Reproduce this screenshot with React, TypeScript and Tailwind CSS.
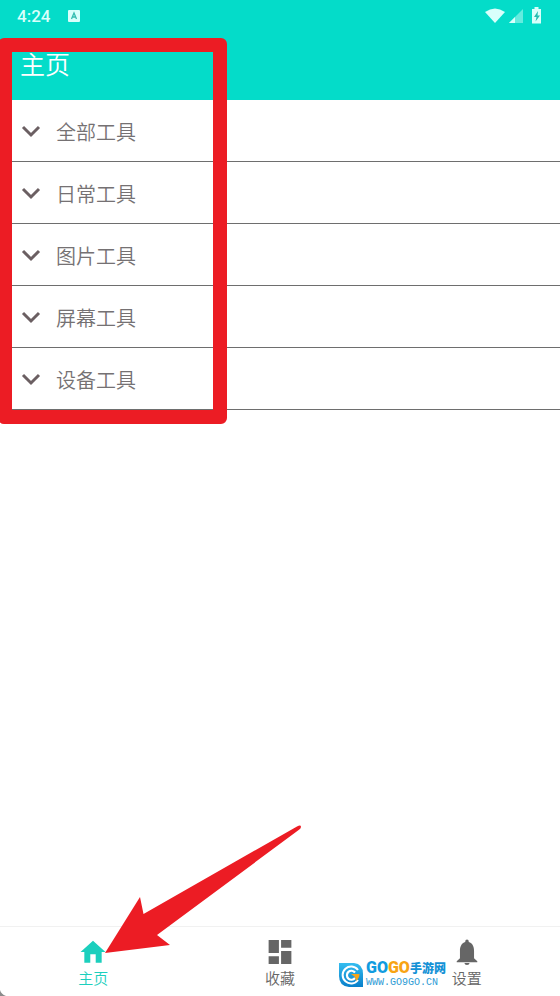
import type { ReactNode } from "react";

const categories = ["全部工具", "日常工具", "图片工具", "屏幕工具", "设备工具"];

export default function App() {
  return (
    <div className="relative flex min-h-screen flex-col overflow-hidden bg-white font-['Roboto','Noto_Sans_CJK_SC',sans-serif] text-[#757173]">
      <div className="relative">
        <header className="h-[100px] bg-[#04dcc9] text-white">
          <StatusBar />
          <h1 className="px-5 pt-4 text-[25px] leading-9 font-[350]">主页</h1>
        </header>
        <main>
          <ul>
            {categories.map((name) => (
              <li key={name} className="border-b border-[#6e6e6e]">
                <button type="button" className="flex h-[61px] w-full items-center gap-3 px-[18px] text-left text-xl font-[350]">
                  <ChevronIcon />
                  <span className="pt-1">{name}</span>
                </button>
              </li>
            ))}
          </ul>
        </main>
        <div className="pointer-events-none absolute -left-0.5 top-[38px] -bottom-3.5 w-[229px] rounded-md border-14 border-[#ec1c24]" />
      </div>

      <nav className="relative mt-auto grid h-[70px] grid-cols-3 border-t border-[#f1f1f1]">
        <NavItem label="主页" active>
          <path d="M9.500 22v-8h5v8h5.500v-10h3.500L12 1.500.5 12H4v10z" />
        </NavItem>
        <NavItem label="收藏">
          <path d="M1.500 1H11v12H1.500zM13 1h9.500v7H13zM1.500 16H11v7H1.500zM13 11h9.500v12H13z" />
        </NavItem>
        <NavItem label="设置">
          <path d="M12 24c1.300 0 2.300-.8 2.300-1.800H9.700C9.700 23.200 10.700 24 12 24zm6.500-6.200V11c0-4.200-1.500-7.400-4.900-8.300V2a1.600 1.600 0 0 0-3.200 0v.7C7 3.600 5.500 6.800 5.500 11v6.800L2.500 20.500v1h19v-1z" />
        </NavItem>
        <PointerArrow />
        <Watermark />
      </nav>
      <svg className="absolute bottom-0 left-0 size-2" viewBox="0 0 8 8" fill="#8b8b8b" aria-hidden="true">
        <path d="M0 2Q1 6 6 8H0z" />
      </svg>
    </div>
  );
}

function StatusBar() {
  return (
    <div className="flex h-8 items-center pr-[18px] pl-[17px] text-[#d9fffb]">
      <span className="text-[17px] leading-6 font-medium">4:24</span>
      <svg className="ml-[18px] size-3" viewBox="0 0 12 12" aria-hidden="true">
        <rect width="12" height="12" rx="1" fill="currentColor" />
        <path d="M3.500 9 6 3l2.500 6M4.500 7h3" fill="none" stroke="#35bcb0" strokeWidth="1.300" />
      </svg>
      <svg className="ml-auto h-[18px] w-[57px]" viewBox="0 0 57 18" fill="currentColor" aria-hidden="true">
        <path d="M0 5Q10-2 20 5L10 16z" />
        <path d="M38 2v14H24z" opacity=".45" />
        <path d="M30 10v6h-6z" />
        <path d="M47 2h2.500V0h4v2H56v14.500h-9z" />
        <path d="M53 4l-4 6h2.500l-1 4.500L55 8.500h-2.500z" fill="#23bdb0" />
      </svg>
    </div>
  );
}

function ChevronIcon() {
  return (
    <svg className="size-[26px]" viewBox="0 0 26 26" fill="none" stroke="#6b5f62" strokeWidth="3" aria-hidden="true">
      <path d="M5 9l8 8 8-8" />
    </svg>
  );
}

function NavItem({ label, active = false, children }: { label: string; active?: boolean; children: ReactNode }) {
  return (
    <a
      href="#"
      aria-current={active ? "page" : undefined}
      className={[
        "flex flex-col items-center pt-3 text-[15px] leading-6 font-[350]",
        active ? "text-[#1ccfbd]" : "text-[#666666]",
      ].join(" ")}
    >
      <svg className="size-[26px]" viewBox="0 0 24 24" fill="currentColor" aria-hidden="true">
        {children}
      </svg>
      <span className="mt-0.5">{label}</span>
    </a>
  );
}

function PointerArrow() {
  return (
    <svg
      className="pointer-events-none absolute bottom-10 left-[104px] h-[134px] w-[200px]"
      viewBox="0 0 200 134"
      fill="#ec1c24"
      aria-hidden="true"
    >
      <path d="M1 131 36 75l3.500 17L193 4.500q4-2 4 .5 0 1.500-3 3.500L53 113l13 10z" />
    </svg>
  );
}

function Watermark() {
  return (
    <div className="pointer-events-none absolute bottom-2 left-[338px] flex items-end gap-0.5 whitespace-nowrap">
      <svg className="size-[26px]" viewBox="0 0 26 26" aria-hidden="true">
        <defs>
          <linearGradient id="badge" x1="0" y1="0" x2="0" y2="1">
            <stop stopColor="#35bdf0" />
            <stop offset="1" stopColor="#087fca" />
          </linearGradient>
        </defs>
        <path d="M1 1h15q9 1 9 11v13H11Q1 24 1 14z" fill="url(#badge)" />
        <path d="M20 8a8.500 8.500 0 1 0 0 10" fill="none" stroke="#fff" strokeWidth="2" />
        <path d="M17 10.500a4.500 4.500 0 1 0 0 5.500" fill="none" stroke="#fff" strokeWidth="2.200" />
        <path d="M13 12h8.500q0 4-3.500 7l-1-4z" fill="#f7a51b" />
      </svg>
      <div>
        <div className="flex items-center font-['Roboto',sans-serif] text-base leading-5 font-black">
          <span className="text-[#119ce0]">GO</span>
          <span className="text-[#f8a414]">GO</span>
          <span className="font-['Noto_Sans_CJK_SC',sans-serif] text-xs leading-5 text-[#1592d6]">手游网</span>
        </div>
        <div className="font-['Liberation_Mono',monospace] text-[10px] leading-[10px] text-[#2e9bd5]">WWW.GO9GO.CN</div>
      </div>
    </div>
  );
}
